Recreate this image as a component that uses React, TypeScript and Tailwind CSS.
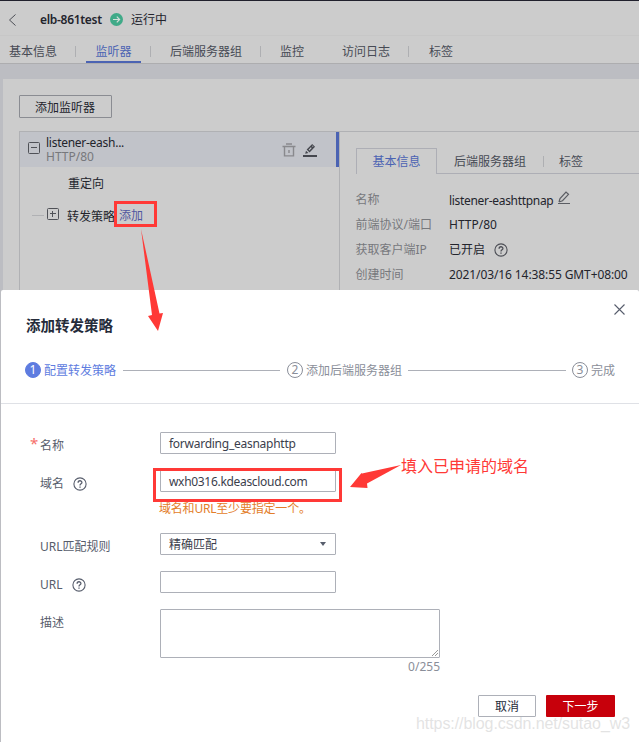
import type { ReactNode } from "react";

function Help({ className = "" }: { className?: string }) {
  return (
    <svg className={`shrink-0 ${className}`} width="14" height="14" viewBox="0 0 14 14" fill="none" stroke="currentColor">
      <circle cx="7" cy="7" r="6.1" strokeWidth="1.1" />
      <path d="M5.1 5.7C5.1 3.1 8.9 3.2 8.9 5.4C8.9 6.8 7 6.7 7 8.4" strokeWidth="1.3" />
      <path d="M7 9.4V10.7" strokeWidth="1.3" />
    </svg>
  );
}

function Sep({ className = "" }: { className?: string }) {
  return <span className={`h-[11px] w-px shrink-0 bg-[#aeafb2] ${className}`} />;
}

function TreeBox({ plus = false }: { plus?: boolean }) {
  return (
    <svg className="shrink-0" width="12" height="12" viewBox="0 0 12 12" fill="none" stroke="#4f5157">
      <rect x="0.5" y="0.5" width="11" height="11" rx="1" />
      <path d="M3 5.5H9" />
      {plus && <path d="M5.5 3V9" />}
    </svg>
  );
}

function Detail({ label, h, children }: { label: string; h: string; children: ReactNode }) {
  return (
    <div className={`flex items-center ${h}`}>
      <span className="w-[93.5px] shrink-0 text-[#77787c]">{label}</span>
      <span className="flex items-center text-[#23242c]">{children}</span>
    </div>
  );
}

function Field({ label, h, required, help, children }: { label: string; h: string; required?: boolean; help?: boolean; children: ReactNode }) {
  return (
    <div className={`flex items-start ${h}`}>
      <div className="flex h-[28px] w-[130px] shrink-0 items-center text-[#575d6c]">
        <span className="w-[10px] shrink-0 pb-[7px] text-[15px] text-[#f66f6a]">{required ? "*" : ""}</span>
        <span>{label}</span>
        {help && <Help className="mb-px ml-[9px] text-[#575d6c]" />}
      </div>
      <div className="flex flex-col">{children}</div>
    </div>
  );
}

const inputBox = "flex h-[22px] w-[176px] items-center rounded-[1px] border border-[#adb0b8] px-2 pt-[2px] text-[#3b3e4c]";

function Step({ n, label, active = false }: { n: number; label: string; active?: boolean }) {
  return (
    <div className={`flex shrink-0 items-center ${active ? "text-[#5e7ce0]" : "text-[#8a8e99]"}`}>
      <span
        className={`mr-[3px] flex size-4 items-center justify-center rounded-full border ${
          active ? "border-[#5e7ce0] bg-[#5e7ce0] text-white" : "border-[#8a8e99]"
        }`}
      >
        {n}
      </span>
      <span className="pt-[2px]">{label}</span>
    </div>
  );
}

export default function App() {
  return (
    <div className="relative flex h-[742px] w-[639px] flex-col overflow-hidden bg-[#bcbdc2] font-['Noto_Sans','Noto_Sans_CJK_SC',sans-serif] text-[12px] leading-[16px] whitespace-nowrap">
      <div className="flex h-[290px] shrink-0 flex-col overflow-hidden">
        <header className="flex h-[35px] shrink-0 items-center border-t border-[#20202c] bg-[#ccc] pt-[3px] text-[#23242c]">
          <svg className="ml-[8px]" width="9" height="12" viewBox="0 0 9 12" fill="none" stroke="#4c4e55">
            <path d="M7.5 0.5L1.5 6L7.5 11.5" />
          </svg>
          <span className="ml-[23px] w-[62px] font-semibold tracking-[-0.3px]">elb-861test</span>
          <svg className="ml-[8px]" width="13" height="13" viewBox="0 0 13 13" fill="none">
            <circle cx="6.5" cy="6.5" r="6.5" fill="#40aa88" />
            <path d="M3 6.5H9.5M6.8 3.7L9.6 6.5L6.8 9.3" stroke="#d5ddd9" strokeWidth="1.2" />
          </svg>
          <span className="ml-[8px]">运行中</span>
        </header>
        <nav className="flex h-[29px] shrink-0 items-center border-t border-b border-t-[#c7c7c7] border-b-[#adadaf] bg-[#ccc] pt-[3px] pl-[9px] text-[#474a54]">
          <span className="pt-[2px]">基本信息</span>
          <Sep className="ml-[18px]" />
          <span className="ml-[10px] flex h-[24px] w-[55px] items-center justify-center border-b-2 border-[#4b63b3] pt-[3px] text-[#4b63b3]">监听器</span>
          <Sep className="ml-[9px]" />
          <span className="ml-[19px] pt-[2px]">后端服务器组</span>
          <Sep className="ml-[18px]" />
          <span className="ml-[19px] pt-[2px]">监控</span>
          <span className="ml-[38px] pt-[2px]">访问日志</span>
          <Sep className="ml-[18px]" />
          <span className="ml-[20px] pt-[2px]">标签</span>
        </nav>
        <main className="mt-[15px] ml-[3px] flex flex-1 flex-col bg-[#ccc]">
          <button className="mt-4 ml-4 h-[23px] w-[93px] shrink-0 rounded-[1px] border border-[#8a8c92] pt-[2px] pr-[1px] text-[#23242c]">添加监听器</button>
          <div className="mt-[13px] ml-4 flex flex-1 border-t border-l border-[#b0b1b4]">
            <aside className="w-[320px] shrink-0 border-r border-[#b0b1b4] text-[#23242c]">
              <div className="flex h-[35px] items-center border-r-[3px] border-[#4b63b3] bg-[#c1c3c9] pl-2">
                <div className="pb-[3px]"><TreeBox /></div>
                <div className="ml-[6px] w-[236px] leading-[14px]">
                  <div className="tracking-[-0.27px]">listener-eash...</div>
                  <div className="text-[#77787c]">HTTP/80</div>
                </div>
                <svg width="14" height="14" viewBox="0 0 14 14" fill="none" stroke="#89898d" strokeWidth="1.4">
                  <path d="M0.5 3.5H13.5M4 1H10M2.5 3.5V12.9H11.5V3.5M7 7V10" />
                </svg>
                <svg className="ml-[7px]" width="14" height="14" viewBox="0 0 14 14">
                  <path d="M0 12H14V14H0ZM2.2 10.8L3 7.8L5.4 10Z" fill="#45474e" />
                  <path d="M5.1 8L10.6 2.3" stroke="#45474e" strokeWidth="4" />
                  <path d="M6 7.1L8.3 4.7M9.5 3.5L10 3" stroke="#c1c3c9" strokeWidth="1.2" />
                </svg>
              </div>
              <div className="flex h-[33px] items-center pl-[48px]">重定向</div>
              <div className="flex h-[30px] items-center pl-3">
                <span className="mr-[3px] h-px w-3 bg-[#b0b1b4]" />
                <div className="pb-[3px]"><TreeBox plus /></div>
                <span className="ml-2 pt-[3px]">转发策略</span>
                <span className="ml-1 pt-px text-[#5057a0]">添加</span>
              </div>
            </aside>
            <section className="flex flex-1 flex-col pt-4 pl-4">
              <div className="flex h-[26px] shrink-0 text-[#474a54]">
                <span className="flex w-[81px] items-center justify-center rounded-t-[1px] border-x border-t border-[#adaeb5] pt-px text-[#4b63b3]">基本信息</span>
                <span className="flex flex-1 items-center border-b border-[#adaeb5] pt-[2px] pl-[17px]">
                  后端服务器组
                  <Sep className="ml-[17px]" />
                  <span className="ml-[15px]">标签</span>
                </span>
              </div>
              <div className="mt-[13px] -ml-[0.5px] flex flex-col">
                <Detail label="名称" h="h-[26px]">
                  <span className="pt-px tracking-[-0.31px]">listener-eashttpnap</span>
                  <svg className="mb-[5px] ml-[5px]" width="12" height="14" viewBox="0 0 12 14" fill="none" stroke="#5b5d63" strokeWidth="1.2">
                    <path d="M1 11L2 7.5L8 1L10.5 3.3L4.5 9.7L1 11M0 12.5H12" />
                  </svg>
                </Detail>
                <Detail label="前端协议/端口" h="h-[24px]">HTTP/80</Detail>
                <Detail label="获取客户端IP" h="h-[25px]">
                  已开启
                  <Help className="ml-[9px] text-[#4c4e55]" />
                </Detail>
                <Detail label="创建时间" h="h-[26px]">
                  <span className="tracking-[-0.1px]">2021/03/16 14:38:55 GMT+08:00</span>
                </Detail>
              </div>
            </section>
          </div>
        </main>
      </div>

      <div className="ml-px flex flex-1 flex-col rounded-t-[2px] bg-white">
        <div className="flex h-[70px] shrink-0 justify-between pt-[14px] pr-[14px] pl-[25px]">
          <h2 className="pt-[13px] text-[14.5px] leading-[16px] font-bold text-[#252b3a]">添加转发策略</h2>
          <svg width="11" height="11" viewBox="0 0 11 11" fill="none" stroke="#575d6c" strokeWidth="1.1">
            <path d="M0.5 0.5L10.5 10.5M10.5 0.5L0.5 10.5" />
          </svg>
        </div>
        <div className="flex h-[20px] shrink-0 items-center pl-[24px]">
          <Step n={1} label="配置转发策略" active />
          <span className="mx-[7px] h-px w-[157px] shrink-0 bg-[#adb0b8]" />
          <Step n={2} label="添加后端服务器组" />
          <span className="mx-[6px] h-px w-[158px] shrink-0 bg-[#adb0b8]" />
          <Step n={3} label="完成" />
        </div>
        <div className="mt-[23px] h-px shrink-0 bg-[#dfe1e6]" />
        <div className="flex flex-col pt-7 pl-[29px]">
          <Field label="名称" h="h-[38px]" required>
            <div className={inputBox}><span className="tracking-[-0.26px]">forwarding_easnaphttp</span></div>
          </Field>
          <Field label="域名" h="h-[63px]" help>
            <div className={inputBox}><span className="tracking-[-0.31px]">wxh0316.kdeascloud.com</span></div>
            <div className="mt-[9px] -ml-px tracking-[-0.2px] text-[#e37d29]">域名和URL至少要指定一个。</div>
          </Field>
          <Field label="URL匹配规则" h="h-[38px]">
            <div className={`${inputBox} justify-between`}>
              精确匹配
              <svg className="mb-[2px]" width="8" height="4" viewBox="0 0 8 4" fill="#575d6c">
                <path d="M1 0H7L4 4Z" />
              </svg>
            </div>
          </Field>
          <Field label="URL" h="h-[38px]" help>
            <div className={inputBox} />
          </Field>
          <Field label="描述" h="h-[66px]">
            <div className="flex h-[49px] w-[280px] shrink-0 items-end justify-end rounded-[1px] border border-[#adb0b8] p-px">
              <svg width="6" height="6" viewBox="0 0 6 6" stroke="#999">
                <path d="M0 6L6 0M3 6L6 3" />
              </svg>
            </div>
            <div className="pt-px text-right text-[#8a8e99]">0/255</div>
          </Field>
        </div>
        <div className="mt-[20px] flex h-[22px] shrink-0 justify-end gap-[10px] pr-6">
          <button className="w-[58px] rounded-[1px] border border-[#adb0b8] pt-[2px] text-[#252b3a]">取消</button>
          <button className="w-[69px] rounded-[1px] bg-[#c7000b] pt-px text-white">下一步</button>
        </div>
      </div>

      <div className="absolute top-[201px] left-[114px] h-[26px] w-[43px] border-[3px] border-[#ff3936]" />
      <div className="absolute top-[468px] left-[153px] h-[34px] w-[189px] border-[3px] border-[#ff3936]" />
      <svg className="absolute top-0 left-0" width="639" height="742" viewBox="0 0 639 742" fill="#ff3936">
        <path d="M141 229L159.5 313.5L163 313L158 331L148 316L152 315Z" />
        <path d="M401 465L362 473.5L361.5 473L350 487L367.5 488L367 483.5Z" />
      </svg>
      <div className="absolute top-[456px] left-[401px] text-[16px] leading-[20px] text-[#ff3936]">填入已申请的域名</div>
      <div className="absolute top-[714px] left-[416px] font-['Liberation_Sans',sans-serif] text-[16px] leading-[20px] tracking-[-0.07px] text-[#dcdcdc]/80">https://blog.csdn.net/sutao_w3</div>
    </div>
  );
}
